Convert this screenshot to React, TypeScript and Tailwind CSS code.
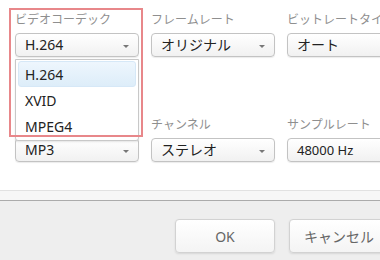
import React from "react";

const font = {
  fontFamily: '"Segoe UI", "Noto Sans", "Noto Sans CJK JP", sans-serif',
};

function Select({ value, small }: { value: string; small?: boolean }) {
  return (
    <div className="relative flex h-[24px] w-[124px] items-center rounded-[4px] border border-[#c3c3c3] bg-gradient-to-b from-white to-[#f1f1f1] pl-[9px] shadow-[0_1px_1px_rgba(0,0,0,0.08)]">
      <span className={`${small ? "text-[13px]" : "text-[14px]"} leading-none text-[#222]`}>{value}</span>
      <span className="absolute right-[9px] top-[11px] h-0 w-0 border-x-[3px] border-t-[3px] border-x-transparent border-t-[#777]" />
    </div>
  );
}

function Field({ label, value, small, noArrow }: { label: string; value: string; small?: boolean; noArrow?: boolean }) {
  return (
    <div className="flex flex-col">
      <div className="h-[13px] text-[12px] leading-[13px] text-[#8f8f8f]">{label}</div>
      <div className="mt-[7px]">
        {noArrow ? (
          <div className="flex h-[24px] w-[124px] items-center rounded-[4px] border border-[#c3c3c3] bg-gradient-to-b from-white to-[#f1f1f1] pl-[9px] shadow-[0_1px_1px_rgba(0,0,0,0.08)]">
            <span className={`${small ? "text-[13px]" : "text-[14px]"} leading-none text-[#222]`}>{value}</span>
          </div>
        ) : (
          <Select value={value} small={small} />
        )}
      </div>
    </div>
  );
}

export default function App() {
  return (
    <div className="relative h-[260px] w-[380px] overflow-hidden bg-white" style={font}>
      <div className="flex h-[190px] flex-col gap-[61px] pl-[15px] pt-[13px]">
        <div className="flex gap-[12px]">
          <Field label="ビデオコーデック" value="H.264" />
          <Field label="フレームレート" value="オリジナル" />
          <Field label="ビットレートタイプ" value="オート" noArrow />
        </div>
        <div className="flex gap-[12px]">
          <Field label="" value="MP3" />
          <Field label="チャンネル" value="ステレオ" />
          <Field label="サンプルレート" value="48000 Hz" small noArrow />
        </div>
      </div>

      <div className="h-[10px] border-t border-[#e2e2e2] bg-[#f7f7f7]" />
      <div className="flex h-[60px] gap-[14px] border-t border-[#ababab] bg-[#eeeeee] pl-[175px] pt-[18px]">
        <button className="h-[34px] w-[100px] shrink-0 rounded-[4px] border border-[#d2d2d2] bg-gradient-to-b from-white to-[#f4f4f4] text-[14px] text-[#666] shadow-[0_1px_2px_rgba(0,0,0,0.1)]">
          OK
        </button>
        <button className="h-[34px] w-[100px] shrink-0 rounded-[4px] border border-[#d2d2d2] bg-gradient-to-b from-white to-[#f4f4f4] text-[14px] text-[#666] shadow-[0_1px_2px_rgba(0,0,0,0.1)]">
          キャンセル
        </button>
      </div>

      {/* open dropdown list */}
      <div className="absolute left-[15px] top-[59px] w-[124px] rounded-b-[3px] border border-[#c8c8c8] bg-white px-[2px] pb-[1px] pt-[1px] shadow-[0_1px_2px_rgba(0,0,0,0.1)]">
        <div className="flex h-[26px] items-center rounded-[3px] border border-[#d6e8f7] bg-gradient-to-b from-[#eef6fd] to-[#ddedf9] pl-[6px] text-[14px] text-[#222]">
          H.264
        </div>
        <div className="flex h-[26px] items-center pl-[7px] text-[14px] text-[#222]">XVID</div>
        <div className="flex h-[26px] items-center pl-[7px] text-[14px] text-[#222]">MPEG4</div>
      </div>

      {/* highlight frame */}
      <div className="pointer-events-none absolute left-[9px] top-[8px] h-[129px] w-[134px] border-2 border-[#e8878a]" />
    </div>
  );
}
